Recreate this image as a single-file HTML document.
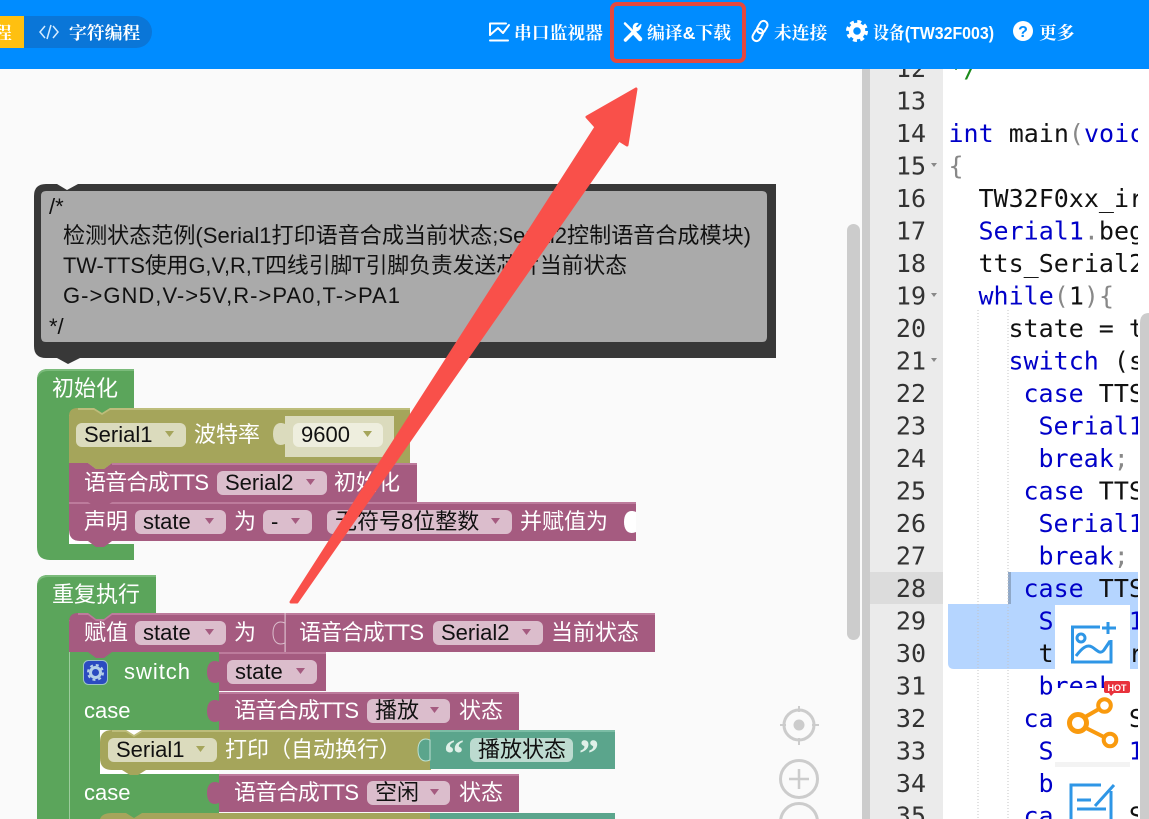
<!DOCTYPE html>
<html><head><meta charset="utf-8"><style>
html,body{margin:0;padding:0;background:#fafafa;overflow:hidden}
svg{display:block}
.h{font:bold 17.8px "Liberation Sans","Noto Serif CJK SC",serif;fill:#fff}
.b{font:22px "Liberation Sans","Noto Sans CJK SC",sans-serif;fill:#fff}
.f{font:22px "Liberation Sans","Noto Sans CJK SC",sans-serif;fill:#111}
.c{font:22px "Liberation Sans","Noto Sans CJK SC",sans-serif;fill:#111}
.n{font:25px "DejaVu Sans Mono",monospace;fill:#333;text-anchor:end}
.k{font:25px "DejaVu Sans Mono",monospace;fill:#111;white-space:pre}
.k .a{fill:#0000c8}.k .g{fill:#888}.k .m{fill:#1a8a1a}
</style></head><body>
<svg xmlns="http://www.w3.org/2000/svg" width="1149" height="819" viewBox="0 0 1149 819">
<rect width="1149" height="819" fill="#fafafa"/>

<!-- right editor -->
<rect x="862" y="69" width="8" height="750" fill="#ccc"/>
<rect x="870" y="69" width="73" height="750" fill="#ebebeb"/>
<rect x="943" y="69" width="206" height="750" fill="#fff"/>
<rect x="870" y="572" width="73" height="32" fill="#dcdcdc"/>
<path d="M1008 572H1138V669H954q-6 0-6-6V604H1008Z" fill="#b5d5ff"/>
<rect x="1008" y="572" width="3" height="32" fill="#8fa8c8"/>
<path d="M978 310V819M1008 310V819" stroke="#c4c4c4" stroke-width="1" stroke-dasharray="1 2"/>
<g class="n">
<text x="926" y="77">12</text><text x="926" y="109.500">13</text><text x="926" y="142">14</text><text x="926" y="174.500">15</text><text x="926" y="207">16</text><text x="926" y="239.500">17</text><text x="926" y="272">18</text><text x="926" y="304.500">19</text><text x="926" y="337">20</text><text x="926" y="369.500">21</text><text x="926" y="402">22</text><text x="926" y="434.500">23</text><text x="926" y="467">24</text><text x="926" y="499.500">25</text><text x="926" y="532">26</text><text x="926" y="564.500">27</text><text x="926" y="597">28</text><text x="926" y="629.500">29</text><text x="926" y="662">30</text><text x="926" y="694.500">31</text><text x="926" y="727">32</text><text x="926" y="759.500">33</text><text x="926" y="792">34</text><text x="926" y="824.500">35</text>
</g>
<path d="M931 163h6l-3 4zM931 293h6l-3 4zM931 358h6l-3 4z" fill="#888"/>
<g class="k">
<text x="948.500" y="77"><tspan class="m">*/</tspan></text>
<text x="948.500" y="142"><tspan class="a">int</tspan> main<tspan class="g">(</tspan><tspan class="a">voic</tspan></text>
<text x="948.500" y="174.500"><tspan class="g">{</tspan></text>
<text x="978.500" y="207">TW32F0xx_ir</text>
<text x="978.500" y="239.500"><tspan class="a">Serial1</tspan><tspan class="g">.</tspan>beg</text>
<text x="978.500" y="272">tts_Serial2</text>
<text x="978.500" y="304.500"><tspan class="a">while</tspan><tspan class="g">(</tspan>1<tspan class="g">){</tspan></text>
<text x="1008.500" y="337">state = tt</text>
<text x="1008.500" y="369.500"><tspan class="a">switch</tspan> (st</text>
<text x="1023.500" y="402"><tspan class="a">case</tspan> TTS</text>
<text x="1038.500" y="434.500"><tspan class="a">Serial1</tspan></text>
<text x="1038.500" y="467"><tspan class="a">break</tspan><tspan class="g">;</tspan></text>
<text x="1023.500" y="499.500"><tspan class="a">case</tspan> TTS</text>
<text x="1038.500" y="532"><tspan class="a">Serial1</tspan></text>
<text x="1038.500" y="564.500"><tspan class="a">break</tspan><tspan class="g">;</tspan></text>
<text x="1023.500" y="597"><tspan class="a">case</tspan> TTS</text>
<text x="1038.500" y="629.500"><tspan class="a">Serial1</tspan></text>
<text x="1038.500" y="662">tts_Serial2</text>
<text x="1038.500" y="694.500"><tspan class="a">break</tspan></text>
<text x="1023.500" y="727"><tspan class="a">case</tspan> TTS</text>
<text x="1038.500" y="759.500"><tspan class="a">Serial1</tspan></text>
<text x="1038.500" y="792"><tspan class="a">break</tspan></text>
<text x="1023.500" y="824.500"><tspan class="a">case</tspan> TTS</text>
</g>
<rect x="1138" y="69" width="11" height="750" fill="#fff"/>
<path d="M1140 323q0-10 9-10V819H1140Z" fill="#ccc"/>

<!-- cards -->
<rect x="1055" y="605" width="75" height="68" fill="#fff"/>
<rect x="1055" y="688" width="75" height="74" fill="#fff"/>
<rect x="1055" y="762" width="75" height="5" fill="#f3f3f3"/>
<rect x="1055" y="767" width="75" height="52" fill="#fff"/>
<g fill="none" stroke="#2e96e6" stroke-width="3">
<path d="M1100 627H1072.500V662H1111V640"/>
<path d="M1108 622V634M1102 628H1116"/>
<circle cx="1081" cy="638" r="4"/>
<path d="M1076 656C1082 648 1087 644 1092 647S1100 655 1104 650L1110 641"/>
<path d="M1101 785H1071V819M1111 791V819"/>
<path d="M1095 806L1114 785"/>
<path d="M1077 800H1091M1077 809H1106"/>
</g>
<g fill="none" stroke="#f99a0e">
<circle cx="1078" cy="723" r="8.500" stroke-width="5"/>
<circle cx="1104.500" cy="705.500" r="6.300" stroke-width="4"/>
<circle cx="1110" cy="740" r="6.300" stroke-width="4"/>
<path d="M1085 717L1099 709M1086 728L1104 737" stroke-width="4"/>
</g>
<path d="M1106 681H1128q2 0 2 2V691q0 2-2 2H1114L1111 696L1109 693H1106q-2 0-2-2V683q0-2 2-2Z" fill="#e8323c"/>
<text x="1117" y="691" text-anchor="middle" font-family="Liberation Sans" font-size="9" font-weight="bold" fill="#fff">HOT</text>

<!-- workspace scrollbar & zoom -->
<rect x="847" y="224" width="13" height="416" rx="6.500" fill="#ccc"/>
<g fill="none" stroke="#ccc" stroke-width="3">
<circle cx="799" cy="725" r="15"/><path d="M799 706V712M799 738V745M780 725H786M812 725H819" stroke-width="2"/>
<circle cx="799" cy="779" r="18.500"/><path d="M799 769V789M789 779H809" stroke-width="2.500"/>
<circle cx="799" cy="822" r="18.500"/>
</g>
<circle cx="799" cy="725" r="5.500" fill="#ccc"/>

<!-- comment -->
<path d="M46 184H57L67 190L78 184H776V358H80L68 364L57 358H46Q34 358 34 346V196Q34 184 46 184Z" fill="#383838"/>
<path d="M46 191H762q5 0 5 5V337q0 5-5 5H46q-5 0-5-5V196q0-5 5-5Z" fill="#aaa"/>
<g class="c">
<text x="49" y="214">/*</text>
<text x="63" y="243" textLength="688" lengthAdjust="spacingAndGlyphs">检测状态范例(Serial1打印语音合成当前状态;Serial2控制语音合成模块)</text>
<text x="63" y="273" textLength="564" lengthAdjust="spacingAndGlyphs">TW-TTS使用G,V,R,T四线引脚T引脚负责发送芯片当前状态</text>
<text x="63" y="303" textLength="337">G-&gt;GND,V-&gt;5V,R-&gt;PA0,T-&gt;PA1</text>
<text x="49" y="334">*/</text>
</g>

<!-- init block -->
<path d="M48 369H134V408H116V415H69V544H134V560H50Q37 560 37 547V380Q37 369 48 369Z" fill="#5ba55b"/>
<path d="M48 369H134V371H48Q39 371 37 380Q37 369 48 369Z" fill="#7bbb7b"/>
<text class="b" x="52" y="396">初始化</text>
<path d="M78 408H94L102 413L110 408H410V463H112L104 469H96L88 463H69V416Q69 408 78 408Z" fill="#a5a55b"/>
<path d="M78 408H94L102 413L110 408H410V410H110L102 415L94 410H78Z" fill="#bdbd7b"/>
<rect x="76" y="423" width="110" height="24" rx="6" fill="#dbdbbd"/>
<text class="f" x="84" y="442">Serial1</text>
<path d="M165 431h9l-4.500 6z" fill="#a5a55b"/>
<text class="b" x="194" y="442">波特率</text>
<rect x="285" y="416" width="109" height="41" fill="#dbdbbd"/>
<path d="M285 424c-7-3-12 1-12 10s5 13 12 10Z" fill="#dbdbbd"/>
<rect x="293" y="423" width="90" height="24" rx="6" fill="#eeeede"/>
<text class="f" x="301" y="442">9600</text>
<path d="M363 431h9l-4.500 6z" fill="#a5a55b"/>

<path d="M69 463H88L96 469H104L112 463H417V503H69Z" fill="#a55b80"/>
<path d="M112 463H417V465H112Z" fill="#bd7b9c"/>
<path d="M88 463L96 469H104L112 463Z" fill="#a5a55b"/>
<text class="b" x="84" y="490" textLength="125">语音合成TTS</text>
<rect x="217" y="471" width="110" height="24" rx="6" fill="#dbbdcc"/>
<text class="f" x="225" y="490">Serial2</text>
<path d="M306 479h9l-4.500 6z" fill="#a55b80"/>
<text class="b" x="334" y="490">初始化</text>

<path d="M69 502H636V541H112L104 547H96L88 541H80Q69 541 69 530Z" fill="#a55b80"/>
<path d="M69 502H636V504H69Z" fill="#bd7b9c"/>
<path d="M88 502L96 508H104L112 502Z" fill="#a55b80"/>
<path d="M69 530Q69 541 80 541H88L88 544H69Z" fill="#fff"/>
<text class="b" x="84" y="529">声明</text>
<rect x="135" y="510" width="91" height="24" rx="6" fill="#dbbdcc"/>
<text class="f" x="143" y="529">state</text>
<path d="M205 518h9l-4.500 6z" fill="#a55b80"/>
<text class="b" x="234" y="529">为</text>
<rect x="263" y="510" width="49" height="24" rx="6" fill="#dbbdcc"/>
<text class="f" x="271" y="529">-</text>
<path d="M291 518h9l-4.500 6z" fill="#a55b80"/>
<rect x="327" y="510" width="185" height="24" rx="6" fill="#dbbdcc"/>
<text class="f" x="335" y="529">无符号8位整数</text>
<path d="M491 518h9l-4.500 6z" fill="#a55b80"/>
<text class="b" x="520" y="529">并赋值为</text>
<path d="M636 512c-7-3-12 1-12 10s5 13 12 10Z" fill="#fff"/>

<!-- repeat block -->
<path d="M48 575H156V613H116V620H69V819H37V586Q37 575 48 575Z" fill="#5ba55b"/>
<path d="M48 575H156V577H48Q39 577 37 586Q37 575 48 575Z" fill="#7bbb7b"/>
<text class="b" x="52" y="602">重复执行</text>

<rect x="69" y="652" width="150" height="167" fill="#5ba55b"/>
<rect x="69" y="652" width="1" height="167" fill="#9ccc9c"/>
<rect x="100" y="730" width="119" height="44" fill="#fff"/>

<path d="M78 613H88L96 619H104L112 613H285V652H112L104 658H96L88 652H69V622Q69 613 78 613Z" fill="#a55b80"/>
<path d="M78 613H88L96 619H104L112 613H285V615H112L104 621H96L88 615H78Z" fill="#bd7b9c"/>
<text class="b" x="84" y="640">赋值</text>
<rect x="135" y="621" width="91" height="24" rx="6" fill="#dbbdcc"/>
<text class="f" x="143" y="640">state</text>
<path d="M205 629h9l-4.500 6z" fill="#a55b80"/>
<text class="b" x="234" y="640">为</text>
<rect x="285" y="613" width="370" height="39" fill="#a55b80"/>
<rect x="285" y="613" width="370" height="2" fill="#bd7b9c"/>
<rect x="284.500" y="613" width="1.200" height="39" fill="#dbbdcc"/>
<path d="M285 623c-7-3-12 1-12 10s5 13 12 10Z" fill="#a55b80" stroke="#dbbdcc" stroke-width="1"/>
<text class="b" x="299" y="640" textLength="125">语音合成TTS</text>
<rect x="433" y="621" width="110" height="24" rx="6" fill="#dbbdcc"/>
<text class="f" x="441" y="640">Serial2</text>
<path d="M522 629h9l-4.500 6z" fill="#a55b80"/>
<text class="b" x="551" y="640">当前状态</text>

<!-- switch -->
<rect x="83.500" y="660.500" width="24" height="24" rx="5" fill="#2b4bc0" stroke="#9cc4c4"/>
<circle cx="95.500" cy="672.500" r="5" fill="none" stroke="#b5d0e8" stroke-width="3"/>
<circle cx="95.500" cy="672.500" r="7.500" fill="none" stroke="#b5d0e8" stroke-width="2" stroke-dasharray="3 2.900"/>
<text class="b" x="124" y="679" textLength="66">switch</text>
<rect x="219" y="652" width="107" height="39" fill="#a55b80"/>
<rect x="219" y="652" width="107" height="2" fill="#bd7b9c"/>
<path d="M219 662c-7-3-12 1-12 10s5 13 12 10Z" fill="#a55b80"/>
<rect x="227" y="660" width="90" height="24" rx="6" fill="#dbbdcc"/>
<text class="f" x="235" y="679">state</text>
<path d="M296 668h9l-4.500 6z" fill="#a55b80"/>

<text class="b" x="84" y="718">case</text>
<rect x="219" y="692" width="300" height="38" fill="#a55b80"/>
<rect x="219" y="692" width="300" height="2" fill="#bd7b9c"/>
<path d="M219 701c-7-3-12 1-12 10s5 13 12 10Z" fill="#a55b80"/>
<text class="b" x="234" y="718" textLength="125">语音合成TTS</text>
<rect x="367" y="699" width="83" height="24" rx="6" fill="#dbbdcc"/>
<text class="f" x="375" y="718">播放</text>
<path d="M430 707h9l-4.500 6z" fill="#a55b80"/>
<text class="b" x="459" y="718">状态</text>

<path d="M112 730H126L134 735L142 730H431V770H146L138 775H130L122 770H112Q100 770 100 758V742Q100 730 112 730Z" fill="#a5a55b"/>
<path d="M112 730H126L134 735L142 730H431V732H142L134 737L126 732H112Z" fill="#bdbd7b"/>
<rect x="108" y="738" width="109" height="24" rx="6" fill="#dbdbbd"/>
<text class="f" x="116" y="757">Serial1</text>
<path d="M196 746h9l-4.500 6z" fill="#a5a55b"/>
<text class="b" x="225" y="757">打印（自动换行）</text>
<rect x="430" y="730" width="185" height="39" fill="#5ba58c"/>
<rect x="430" y="730" width="185" height="2" fill="#7bbda5"/>
<path d="M430 740c-7-3-12 1-12 10s5 13 12 10Z" fill="#5ba58c" stroke="#bde0d2" stroke-width="1"/>
<text x="444" y="767" font-family="Liberation Serif" font-size="40" font-weight="bold" fill="#dff0e8">“</text>
<rect x="470" y="738" width="103" height="24" rx="6" fill="#bddbd0"/>
<text class="f" x="478" y="757">播放状态</text>
<text x="579" y="767" font-family="Liberation Serif" font-size="40" font-weight="bold" fill="#dff0e8">”</text>

<text class="b" x="84" y="800">case</text>
<rect x="219" y="774" width="300" height="38" fill="#a55b80"/>
<rect x="219" y="774" width="300" height="2" fill="#bd7b9c"/>
<path d="M219 783c-7-3-12 1-12 10s5 13 12 10Z" fill="#a55b80"/>
<text class="b" x="234" y="800" textLength="125">语音合成TTS</text>
<rect x="367" y="781" width="83" height="24" rx="6" fill="#dbbdcc"/>
<text class="f" x="375" y="800">空闲</text>
<path d="M430 789h9l-4.500 6z" fill="#a55b80"/>
<text class="b" x="459" y="800">状态</text>
<path d="M112 813H126L134 818L142 813H431V819H100Q102 813 112 813Z" fill="#a5a55b"/>
<rect x="430" y="813" width="185" height="6" fill="#5ba58c"/>

<!-- arrow -->
<path d="M291 602L596 127L587 117L636 89L627 145L619 140L297 602Z" fill="#f9504a" stroke="#f9504a" stroke-width="3" stroke-linejoin="round"/>

<!-- header -->
<rect width="1149" height="69" fill="#008cff"/>
<path d="M24 16H136a16 16 0 0 1 0 32H24Z" fill="#0a76d8"/>
<rect y="16" width="24" height="32" fill="#ffc010"/>
<text class="h" x="-6" y="39">程</text>
<path d="M45 26L40 32L45 38M53 26L58 32L53 38M51 25L47 39" fill="none" stroke="#d5ebff" stroke-width="1.500"/>
<text class="h" x="69" y="39">字符编程</text>

<g fill="none" stroke="#fff" stroke-linecap="round" stroke-linejoin="round">
<path d="M490 35V23.500H506" stroke-width="2"/>
<path d="M490 35L498 28L503 33L509 25" stroke-width="2"/>
<path d="M490 40.500H508" stroke-width="2"/>
<!-- screwdriver -->
<path d="M625 23.500L634 32.500" stroke-width="2.500"/>
<path d="M634 32.500L640 39" stroke-width="4.500"/>
<!-- wrench -->
<path d="M625.500 40L635.500 30" stroke-width="3.500"/>
<path d="M641 24.500L637.500 28L635 26.500L638 23.500C634.500 22.500 632.500 25.500 633.500 29.500C636 32 640.500 31 641 24.500Z" fill="#fff" stroke-width="1"/>
<!-- link -->
<g stroke-width="2" transform="rotate(-60 760 31)">
<rect x="749" y="27" width="13" height="8" rx="4"/>
<rect x="758" y="27" width="13" height="8" rx="4"/>
</g>
</g>
<g fill="none" stroke="#fff">
<circle cx="857" cy="31" r="6" stroke-width="4.500"/>
<circle cx="857" cy="31" r="9.500" stroke-width="3" stroke-dasharray="4 3.460"/>
</g>
<text class="h" x="514" y="39">串口监视器</text>
<text class="h" x="647" y="39">编译&amp;下载</text>
<text class="h" x="774" y="39">未连接</text>
<text class="h" x="873" y="39" textLength="121" lengthAdjust="spacingAndGlyphs">设备(TW32F003)</text>
<circle cx="1023" cy="31" r="10" fill="#fff"/>
<text x="1023" y="37" text-anchor="middle" font-family="Liberation Sans" font-weight="bold" font-size="16" fill="#008cff">?</text>
<text class="h" x="1039" y="39">更多</text>
<rect x="612" y="4" width="132" height="57" rx="5" fill="none" stroke="#e5483f" stroke-width="4"/>
</svg>
</body></html>
